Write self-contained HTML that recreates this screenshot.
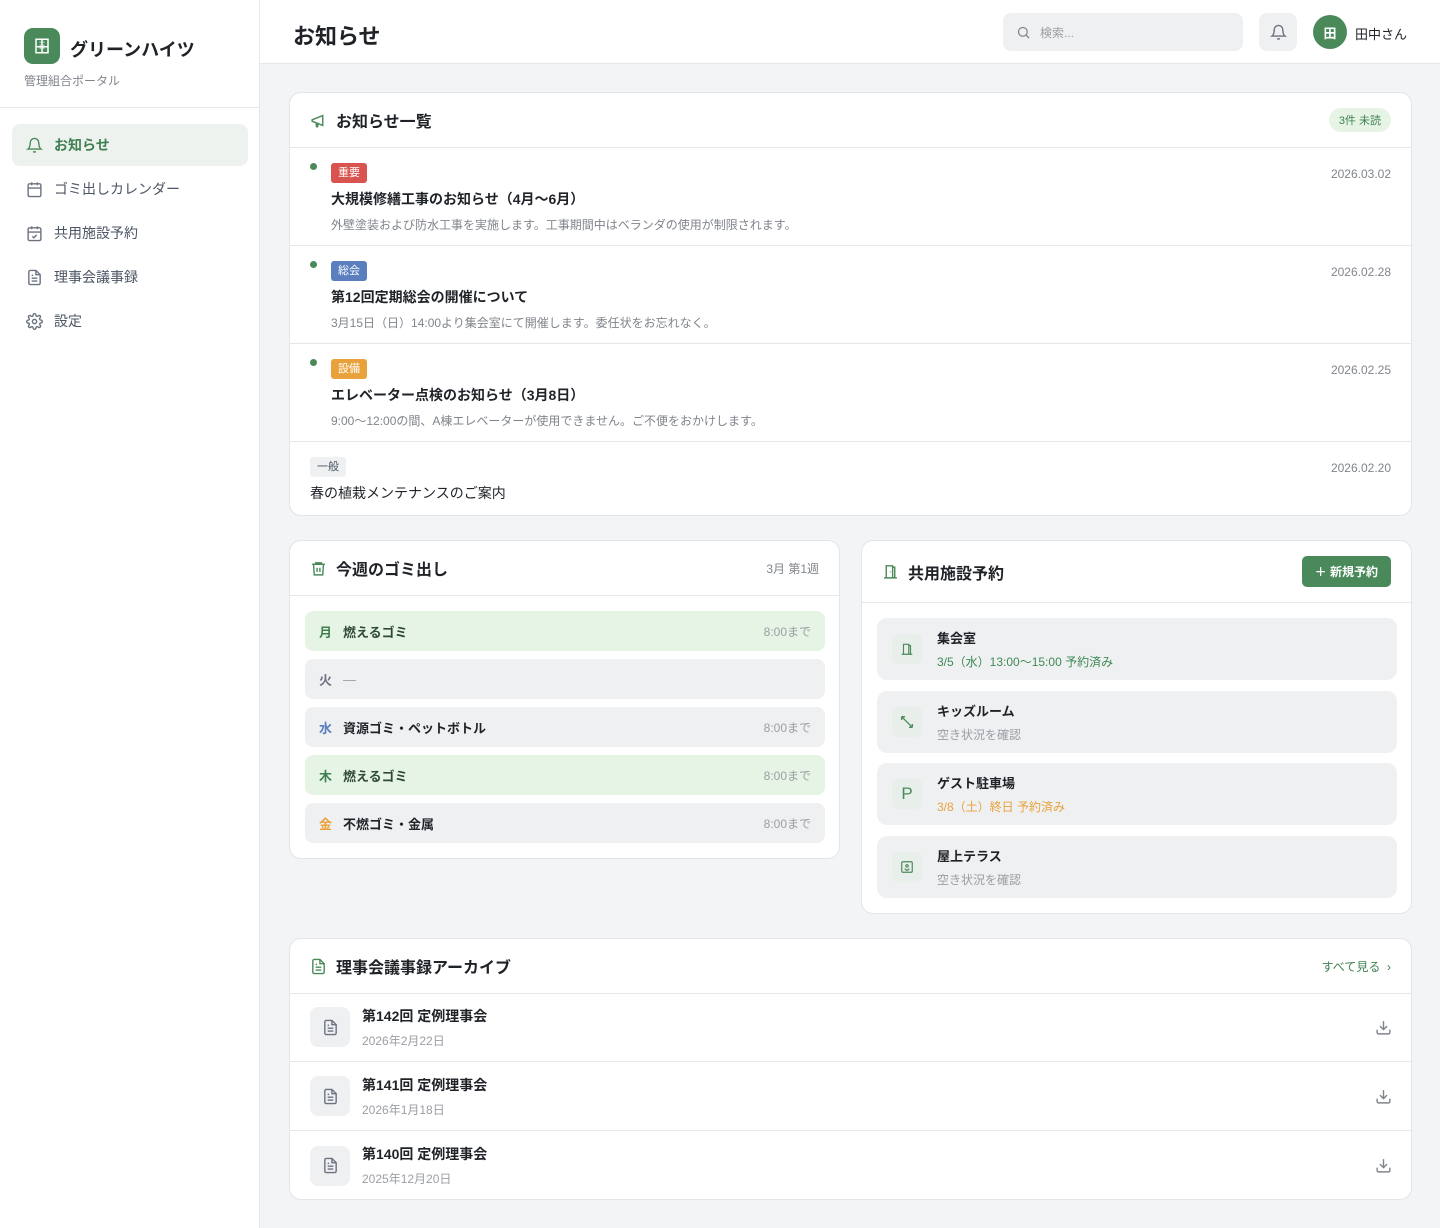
<!DOCTYPE html>
<html><head><meta charset="utf-8"><style>
*{box-sizing:border-box;margin:0;padding:0}
body{width:1440px;height:1228px;font-family:"Liberation Sans","Noto Sans CJK JP",sans-serif;background:#f3f4f6;color:#1f2328;position:relative;overflow:hidden}
.abs{position:absolute}
.side{position:absolute;left:0;top:0;width:260px;height:1228px;background:#fff;border-right:1px solid #e5e7eb}
.logo{position:absolute;left:24px;top:28px;width:36px;height:36px;border-radius:9px;background:#4a8a5a;display:flex;align-items:center;justify-content:center}
.nav{position:absolute;left:12px;width:236px;height:42px;border-radius:8px;display:flex;align-items:center;padding-left:14px;font-size:14px;color:#4b5563}
.nav svg{margin-right:11px}
.nav.act{background:#edf2ee;color:#3f7f50;font-weight:bold}
.hdr{position:absolute;left:260px;top:0;width:1180px;height:64px;background:#fff;border-bottom:1px solid #e5e7eb}
.card{position:absolute;background:#fff;border:1px solid #e2e5e9;border-radius:12px;overflow:hidden}
.ch{height:55px;border-bottom:1px solid #e5e7eb;display:flex;align-items:center;padding:0 20px;font-size:16px;font-weight:bold}
.ch svg{margin-right:9px}
.ni{position:relative;border-bottom:1px solid #e5e7eb;height:98px;padding:15px 20px 0 41px}
.dot{position:absolute;left:20px;top:15px;width:7px;height:7px;border-radius:50%;background:#4a8a5a}
.tag{display:inline-block;font-size:11px;color:#fff;padding:0 7px;height:20px;line-height:20px;border-radius:3px}
.nt{font-size:14px;font-weight:bold;margin-top:6px}
.nd{font-size:12px;color:#80858c;margin-top:7px}
.date{position:absolute;right:20px;top:19px;font-size:12px;color:#80858c}
.gr{position:absolute;left:15px;width:520px;height:40px;border-radius:8px;background:#eff0f2;display:flex;align-items:center;padding:0 14px;font-size:13px;font-weight:bold}
.gr .d{width:24px}
.gr .t{margin-left:auto;font-weight:normal;color:#9a9ea4;font-size:12px}
.gr.g{background:#e6f4e6}
.fr{position:absolute;left:15px;width:520px;height:62px;border-radius:10px;background:#eff0f2;display:flex;align-items:center;padding-left:15px}
.fi{width:30px;height:30px;border-radius:6px;background:#e8eeea;display:flex;align-items:center;justify-content:center;margin-right:15px;color:#4a8a5a}
.fn{font-size:13px;font-weight:bold}
.fs{font-size:12px;color:#9a9ea4;margin-top:6px}
.mr{position:absolute;left:0;width:1122px;height:69px;border-bottom:1px solid #e5e7eb;display:flex;align-items:center;padding-left:20px}
.mi{width:40px;height:40px;border-radius:8px;background:#eff0f2;display:flex;align-items:center;justify-content:center;margin-right:12px}
.mn{font-size:14px;font-weight:bold}
.md{font-size:12px;color:#9a9ea4;margin-top:6px}
.dl{position:absolute;right:20px;top:26px}
</style></head><body>
<div class="side">
<div class="logo"><svg width="18" height="18" viewBox="0 0 24 24" fill="none" stroke="#fff" stroke-width="2"><rect x="4" y="3" width="16" height="18"/><path d="M9 7h1M14 7h1M9 11h1M14 11h1M9 15h1M14 15h1M4 13h16M12 3v18"/></svg></div>
<div class="abs" style="left:70px;top:36px;font-size:18px;font-weight:bold">グリーンハイツ</div>
<div class="abs" style="left:24px;top:72px;font-size:12px;color:#80858c">管理組合ポータル</div>
<div class="abs" style="left:0;top:107px;width:259px;border-top:1px solid #e5e7eb"></div>
<div class="nav act" style="top:124px"><svg width="17" height="17" viewBox="0 0 24 24" fill="none" stroke="#4a8a5a" stroke-width="2"><path d="M6 8a6 6 0 0 1 12 0c0 7 3 9 3 9H3s3-2 3-9M10 21h4"/></svg>お知らせ</div>
<div class="nav" style="top:168px"><svg width="17" height="17" viewBox="0 0 24 24" fill="none" stroke="#6b7280" stroke-width="2"><rect x="3" y="4" width="18" height="18" rx="2"/><path d="M16 2v4M8 2v4M3 10h18"/></svg>ゴミ出しカレンダー</div>
<div class="nav" style="top:212px"><svg width="17" height="17" viewBox="0 0 24 24" fill="none" stroke="#6b7280" stroke-width="2"><rect x="3" y="4" width="18" height="18" rx="2"/><path d="M16 2v4M8 2v4M3 10h18M9 16l2 2 4-4"/></svg>共用施設予約</div>
<div class="nav" style="top:256px"><svg width="17" height="17" viewBox="0 0 24 24" fill="none" stroke="#6b7280" stroke-width="2"><path d="M14 2H6a2 2 0 0 0-2 2v16a2 2 0 0 0 2 2h12a2 2 0 0 0 2-2V8z"/><path d="M14 2v6h6M8 13h8M8 17h8M8 9h2"/></svg>理事会議事録</div>
<div class="nav" style="top:300px"><svg width="17" height="17" viewBox="0 0 24 24" fill="none" stroke="#6b7280" stroke-width="2"><circle cx="12" cy="12" r="3"/><path d="M19.4 15a1.7 1.7 0 0 0 .3 1.8l.1.1a2 2 0 1 1-2.8 2.8l-.1-.1a1.7 1.7 0 0 0-1.8-.3 1.7 1.7 0 0 0-1 1.5V21a2 2 0 1 1-4 0v-.1a1.7 1.7 0 0 0-1.1-1.5 1.7 1.7 0 0 0-1.8.3l-.1.1a2 2 0 1 1-2.8-2.8l.1-.1a1.7 1.7 0 0 0 .3-1.8 1.7 1.7 0 0 0-1.5-1H3a2 2 0 1 1 0-4h.1a1.7 1.7 0 0 0 1.5-1.1 1.7 1.7 0 0 0-.3-1.8l-.1-.1a2 2 0 1 1 2.8-2.8l.1.1a1.7 1.7 0 0 0 1.8.3H9a1.7 1.7 0 0 0 1-1.5V3a2 2 0 1 1 4 0v.1a1.7 1.7 0 0 0 1 1.5 1.7 1.7 0 0 0 1.8-.3l.1-.1a2 2 0 1 1 2.8 2.8l-.1.1a1.7 1.7 0 0 0-.3 1.8V9a1.7 1.7 0 0 0 1.5 1H21a2 2 0 1 1 0 4h-.1a1.7 1.7 0 0 0-1.5 1z"/></svg>設定</div>
</div>
<div class="hdr">
<div class="abs" style="left:33px;top:19px;font-size:22px;font-weight:bold">お知らせ</div>
<div class="abs" style="left:743px;top:13px;width:240px;height:38px;border-radius:8px;background:#eff0f2;display:flex;align-items:center;padding-left:13px;font-size:12px;color:#9a9ea4"><svg width="15" height="15" viewBox="0 0 24 24" fill="none" stroke="#80858c" stroke-width="2" style="margin-right:9px"><circle cx="11" cy="11" r="7"/><path d="M21 21l-5-5"/></svg>検索...</div>
<div class="abs" style="left:999px;top:13px;width:38px;height:38px;border-radius:8px;background:#eff0f2;display:flex;align-items:center;justify-content:center"><svg width="17" height="17" viewBox="0 0 24 24" fill="none" stroke="#6b7280" stroke-width="2"><path d="M6 8a6 6 0 0 1 12 0c0 7 3 9 3 9H3s3-2 3-9M10 21h4"/></svg></div>
<div class="abs" style="left:1053px;top:15px;width:34px;height:34px;border-radius:50%;background:#4a8a5a;color:#fff;font-size:13px;font-weight:bold;display:flex;align-items:center;justify-content:center">田</div>
<div class="abs" style="left:1095px;top:24px;font-size:13px">田中さん</div>
</div>

<div class="card" style="left:289px;top:92px;width:1123px;height:424px">
<div class="ch"><svg width="17" height="17" viewBox="0 0 24 24" fill="none" stroke="#4a8a5a" stroke-width="2"><path d="M3 11l15-6v14L3 13z M11 15v5a1 1 0 0 1-2 0v-5"/></svg>お知らせ一覧<span style="margin-left:auto;background:#e6f4e6;color:#3f7f50;font-size:11px;font-weight:normal;padding:4px 10px;border-radius:12px">3件 未読</span></div>
<div class="ni"><div class="dot"></div><span class="tag" style="background:#d9534f">重要</span><div class="nt">大規模修繕工事のお知らせ（4月〜6月）</div><div class="nd">外壁塗装および防水工事を実施します。工事期間中はベランダの使用が制限されます。</div><div class="date">2026.03.02</div></div>
<div class="ni"><div class="dot"></div><span class="tag" style="background:#5b7fbe">総会</span><div class="nt">第12回定期総会の開催について</div><div class="nd">3月15日（日）14:00より集会室にて開催します。委任状をお忘れなく。</div><div class="date">2026.02.28</div></div>
<div class="ni"><div class="dot"></div><span class="tag" style="background:#e9a23b">設備</span><div class="nt">エレベーター点検のお知らせ（3月8日）</div><div class="nd">9:00〜12:00の間、A棟エレベーターが使用できません。ご不便をおかけします。</div><div class="date">2026.02.25</div></div>
<div class="ni" style="border:none;padding-left:20px"><span class="tag" style="background:#eff0f2;color:#4b5563">一般</span><div class="nt" style="font-weight:normal">春の植栽メンテナンスのご案内</div><div class="date">2026.02.20</div></div>
</div>

<div class="card" style="left:289px;top:540px;width:551px;height:319px">
<div class="ch" style="height:55px"><svg width="17" height="17" viewBox="0 0 24 24" fill="none" stroke="#4a8a5a" stroke-width="2"><path d="M3 6h18M8 6V4h8v2M5 6l1 15h12l1-15M10 11v6M14 11v6"/></svg>今週のゴミ出し<span style="margin-left:auto;font-size:12px;color:#80858c;font-weight:normal">3月 第1週</span></div>
<div class="gr g" style="top:70px"><span class="d" style="color:#3f7f50">月</span><span style="color:#2f4a37">燃えるゴミ</span><span class="t">8:00まで</span></div>
<div class="gr" style="top:118px"><span class="d" style="color:#6b7280">火</span><span style="color:#9a9ea4;font-weight:normal">—</span></div>
<div class="gr" style="top:166px"><span class="d" style="color:#5b7fbe">水</span><span>資源ゴミ・ペットボトル</span><span class="t">8:00まで</span></div>
<div class="gr g" style="top:214px"><span class="d" style="color:#3f7f50">木</span><span style="color:#2f4a37">燃えるゴミ</span><span class="t">8:00まで</span></div>
<div class="gr" style="top:262px"><span class="d" style="color:#e9a23b">金</span><span>不燃ゴミ・金属</span><span class="t">8:00まで</span></div>
</div>

<div class="card" style="left:861px;top:540px;width:551px;height:374px">
<div class="ch" style="height:62px"><svg width="17" height="17" viewBox="0 0 24 24" fill="none" stroke="#4a8a5a" stroke-width="2"><path d="M3 21h18M6 21V4h9v17M15 6h3v15M12 12v1"/></svg>共用施設予約<span style="margin-left:auto;background:#4a8a5a;color:#fff;font-size:12px;padding:7px 13px;border-radius:5px">＋ 新規予約</span></div>
<div class="fr" style="top:77px"><div class="fi"><svg width="14" height="14" viewBox="0 0 24 24" fill="none" stroke="#4a8a5a" stroke-width="2"><path d="M3 21h18M6 21V4h9v17M15 6h3v15"/></svg></div><div><div class="fn">集会室</div><div class="fs" style="color:#3f8a55">3/5（水）13:00〜15:00 予約済み</div></div></div>
<div class="fr" style="top:150px"><div class="fi"><svg width="16" height="16" viewBox="0 0 24 24" fill="none" stroke="#4a8a5a" stroke-width="2"><path d="M4 4l16 16M4 4v5M4 4h5M20 20v-5M20 20h-5"/></svg></div><div><div class="fn">キッズルーム</div><div class="fs">空き状況を確認</div></div></div>
<div class="fr" style="top:222px"><div class="fi" style="font-size:17px">P</div><div><div class="fn">ゲスト駐車場</div><div class="fs" style="color:#e9a23b">3/8（土）終日 予約済み</div></div></div>
<div class="fr" style="top:295px"><div class="fi"><svg width="14" height="14" viewBox="0 0 24 24" fill="none" stroke="#4a8a5a" stroke-width="2"><rect x="3" y="3" width="18" height="18" rx="2"/><circle cx="12" cy="10" r="2"/><path d="M8 15l4 3 4-3"/></svg></div><div><div class="fn">屋上テラス</div><div class="fs">空き状況を確認</div></div></div>
</div>

<div class="card" style="left:289px;top:938px;width:1123px;height:262px">
<div class="ch" style="height:55px"><svg width="17" height="17" viewBox="0 0 24 24" fill="none" stroke="#4a8a5a" stroke-width="2"><path d="M14 2H6a2 2 0 0 0-2 2v16a2 2 0 0 0 2 2h12a2 2 0 0 0 2-2V8z"/><path d="M14 2v6h6M8 13h8M8 17h8M8 9h2"/></svg>理事会議事録アーカイブ<span style="margin-left:auto;color:#3f7f50;font-size:12px;font-weight:normal">すべて見る &nbsp;›</span></div>
<div class="mr" style="top:54px"><div class="mi"><svg width="17" height="17" viewBox="0 0 24 24" fill="none" stroke="#6b7280" stroke-width="2"><path d="M14 2H6a2 2 0 0 0-2 2v16a2 2 0 0 0 2 2h12a2 2 0 0 0 2-2V8z"/><path d="M14 2v6h6M8 13h8M8 17h8M8 9h2"/></svg></div><div><div class="mn">第142回 定例理事会</div><div class="md">2026年2月22日</div></div><svg class="dl" width="17" height="17" viewBox="0 0 24 24" fill="none" stroke="#80858c" stroke-width="2"><path d="M21 15v4a2 2 0 0 1-2 2H5a2 2 0 0 1-2-2v-4M7 10l5 5 5-5M12 15V3"/></svg></div>
<div class="mr" style="top:123px"><div class="mi"><svg width="17" height="17" viewBox="0 0 24 24" fill="none" stroke="#6b7280" stroke-width="2"><path d="M14 2H6a2 2 0 0 0-2 2v16a2 2 0 0 0 2 2h12a2 2 0 0 0 2-2V8z"/><path d="M14 2v6h6M8 13h8M8 17h8M8 9h2"/></svg></div><div><div class="mn">第141回 定例理事会</div><div class="md">2026年1月18日</div></div><svg class="dl" width="17" height="17" viewBox="0 0 24 24" fill="none" stroke="#80858c" stroke-width="2"><path d="M21 15v4a2 2 0 0 1-2 2H5a2 2 0 0 1-2-2v-4M7 10l5 5 5-5M12 15V3"/></svg></div>
<div class="mr" style="top:192px;border:none"><div class="mi"><svg width="17" height="17" viewBox="0 0 24 24" fill="none" stroke="#6b7280" stroke-width="2"><path d="M14 2H6a2 2 0 0 0-2 2v16a2 2 0 0 0 2 2h12a2 2 0 0 0 2-2V8z"/><path d="M14 2v6h6M8 13h8M8 17h8M8 9h2"/></svg></div><div><div class="mn">第140回 定例理事会</div><div class="md">2025年12月20日</div></div><svg class="dl" width="17" height="17" viewBox="0 0 24 24" fill="none" stroke="#80858c" stroke-width="2"><path d="M21 15v4a2 2 0 0 1-2 2H5a2 2 0 0 1-2-2v-4M7 10l5 5 5-5M12 15V3"/></svg></div>
</div>
</body></html>
